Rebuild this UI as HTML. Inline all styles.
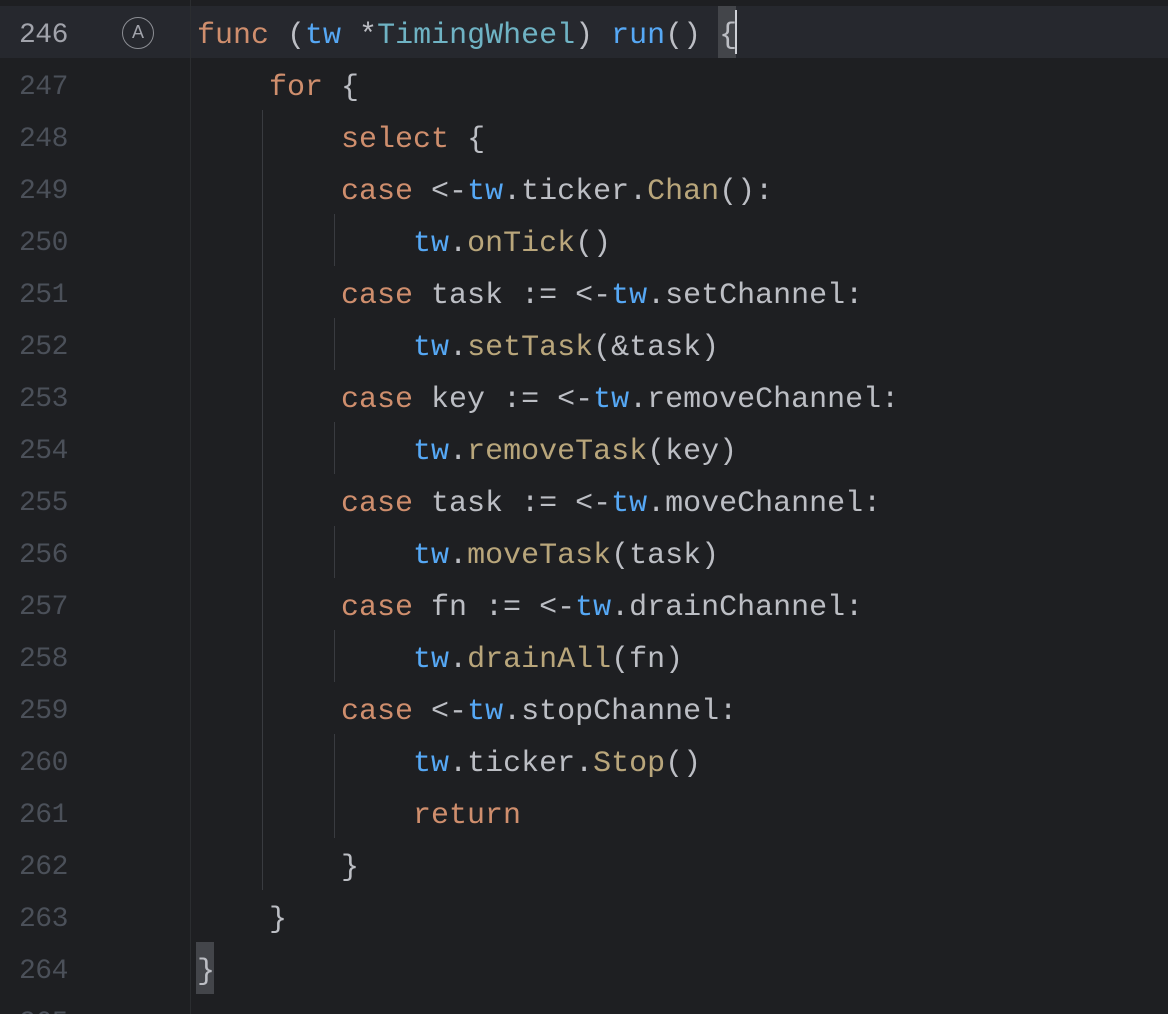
<!DOCTYPE html>
<html><head><meta charset="utf-8"><style>
html,body{margin:0;padding:0;background:#1e1f22;width:1168px;height:1014px;overflow:hidden}
body{position:relative;font-family:"Liberation Mono",monospace;font-size:30px}
.cur{position:absolute;left:0;top:6px;width:1168px;height:52px;background:#26282e}
.sep{position:absolute;left:190px;top:0;width:1px;height:1014px;background:#2b2d30}
.ln{position:absolute;left:19px;height:52px;line-height:52px;color:#4b5059;font-size:28px;margin-top:4px;letter-spacing:-0.5px}
.code{position:absolute;left:197px;height:52px;line-height:52px;color:#bcbec4;white-space:pre;margin-top:4px}
.k{color:#cf8e6d}.v{color:#56a8f5}.t{color:#6fb3c4}.f{color:#56a8f5}.m{color:#b9a67b}
.g{position:absolute;width:1px;background:#393b40}
.bx{position:absolute;background:#43454a}
</style></head><body>
<div class="cur"></div>
<div class="sep"></div>
<div class="g" style="left:262px;top:110px;height:780px"></div>
<div class="g" style="left:334px;top:214px;height:52px"></div>
<div class="g" style="left:334px;top:318px;height:52px"></div>
<div class="g" style="left:334px;top:422px;height:52px"></div>
<div class="g" style="left:334px;top:526px;height:52px"></div>
<div class="g" style="left:334px;top:630px;height:52px"></div>
<div class="g" style="left:334px;top:734px;height:104px"></div>
<div class="bx" style="left:718px;top:6px;width:18px;height:52px"></div>
<div style="position:absolute;left:735px;top:10px;width:2px;height:44px;background:#ced0d6"></div>
<div class="bx" style="left:196px;top:942px;width:18px;height:52px"></div>
<div style="position:absolute;left:122px;top:17px;width:32px;height:32px;border:1.5px solid #8c8e94;border-radius:50%;box-sizing:border-box;color:#a1a3ab;font-family:'Liberation Sans',sans-serif;font-size:18px;text-align:center;line-height:29px">A</div>

<div class="ln" style="top:6px;color:#a1a3ab">246</div>
<div class="ln" style="top:58px">247</div>
<div class="ln" style="top:110px">248</div>
<div class="ln" style="top:162px">249</div>
<div class="ln" style="top:214px">250</div>
<div class="ln" style="top:266px">251</div>
<div class="ln" style="top:318px">252</div>
<div class="ln" style="top:370px">253</div>
<div class="ln" style="top:422px">254</div>
<div class="ln" style="top:474px">255</div>
<div class="ln" style="top:526px">256</div>
<div class="ln" style="top:578px">257</div>
<div class="ln" style="top:630px">258</div>
<div class="ln" style="top:682px">259</div>
<div class="ln" style="top:734px">260</div>
<div class="ln" style="top:786px">261</div>
<div class="ln" style="top:838px">262</div>
<div class="ln" style="top:890px">263</div>
<div class="ln" style="top:942px">264</div>
<div class="ln" style="top:994px">265</div>

<div class="code" style="top:6px"><span class="k">func</span> (<span class="v">tw</span> *<span class="t">TimingWheel</span>) <span class="f">run</span>() {</div>
<div class="code" style="top:58px">    <span class="k">for</span> {</div>
<div class="code" style="top:110px">        <span class="k">select</span> {</div>
<div class="code" style="top:162px">        <span class="k">case</span> &lt;-<span class="v">tw</span>.ticker.<span class="m">Chan</span>():</div>
<div class="code" style="top:214px">            <span class="v">tw</span>.<span class="m">onTick</span>()</div>
<div class="code" style="top:266px">        <span class="k">case</span> task := &lt;-<span class="v">tw</span>.setChannel:</div>
<div class="code" style="top:318px">            <span class="v">tw</span>.<span class="m">setTask</span>(&amp;task)</div>
<div class="code" style="top:370px">        <span class="k">case</span> key := &lt;-<span class="v">tw</span>.removeChannel:</div>
<div class="code" style="top:422px">            <span class="v">tw</span>.<span class="m">removeTask</span>(key)</div>
<div class="code" style="top:474px">        <span class="k">case</span> task := &lt;-<span class="v">tw</span>.moveChannel:</div>
<div class="code" style="top:526px">            <span class="v">tw</span>.<span class="m">moveTask</span>(task)</div>
<div class="code" style="top:578px">        <span class="k">case</span> fn := &lt;-<span class="v">tw</span>.drainChannel:</div>
<div class="code" style="top:630px">            <span class="v">tw</span>.<span class="m">drainAll</span>(fn)</div>
<div class="code" style="top:682px">        <span class="k">case</span> &lt;-<span class="v">tw</span>.stopChannel:</div>
<div class="code" style="top:734px">            <span class="v">tw</span>.ticker.<span class="m">Stop</span>()</div>
<div class="code" style="top:786px">            <span class="k">return</span></div>
<div class="code" style="top:838px">        }</div>
<div class="code" style="top:890px">    }</div>
<div class="code" style="top:942px">}</div>
</body></html>
